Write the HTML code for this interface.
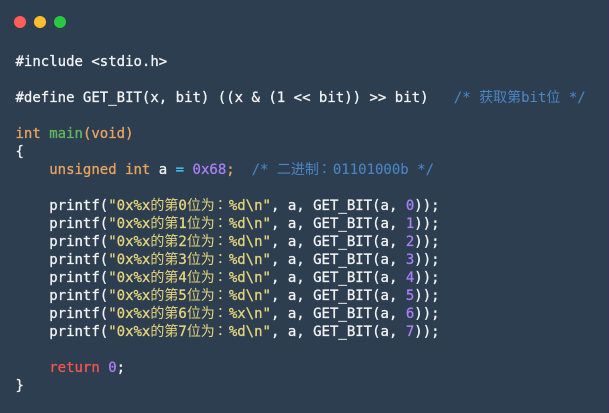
<!DOCTYPE html>
<html><head><meta charset="utf-8"><style>
html,body{margin:0;padding:0;width:609px;height:413px;overflow:hidden;background:#2d3e50}
#w{position:absolute;left:0;top:0;width:608px;height:413px;background:#2d3e50;border-top-left-radius:3px;border-top-right-radius:3px}
#edge{position:absolute;left:608px;top:0;width:1px;height:413px;background:#3f2f5c}
.d{position:absolute;top:16px;width:12px;height:12px;border-radius:50%}
pre{position:absolute;left:15.5px;top:53px;margin:0;font:14px/18px "DejaVu Sans Mono","WenQuanYi Zen Hei","Noto Sans CJK SC",monospace;color:#f2f2f2;white-space:pre;-webkit-text-stroke:.3px}
.k{color:#e8a35f}.f{color:#5fb760}.r{color:#f4554d}.n{color:#a97ef5}.s{color:#e6d47c}.c{color:#4a86c4;-webkit-text-stroke:.1px}.o{color:#3fc6e6}.p{color:#e8a35f}
i{font-style:normal;-webkit-text-stroke:0}
b{font-weight:normal;font-family:"Noto Sans CJK TC",sans-serif;-webkit-text-stroke:0;line-height:0;position:relative;left:-1.5px}
</style></head><body>
<div id="w"></div><div id="edge"></div>
<div class="d" style="left:14px;background:#ff5f56"></div>
<div class="d" style="left:34px;background:#ffbd2e"></div>
<div class="d" style="left:54px;background:#27c93f"></div>
<pre>#include &lt;stdio.h&gt;

#define GET_BIT(x, bit) ((x &amp; (1 &lt;&lt; bit)) &gt;&gt; bit)   <span class="c">/* <i>获取第</i>bit<i>位</i> */</span>

<span class="k">int</span> <span class="f">main</span><span class="p">(void)</span>
{
    <span class="k">unsigned int</span> a <span class="o">=</span> <span class="n">0x68</span><span class="p">;</span>  <span class="c">/* <i>二进制</i><b>：</b>01101000b */</span>

    printf(<span class="s">"0x%x<i>的第</i>0<i>位为</i><b>：</b>%d\n"</span>, a, GET_BIT(a, <span class="n">0</span>));
    printf(<span class="s">"0x%x<i>的第</i>1<i>位为</i><b>：</b>%d\n"</span>, a, GET_BIT(a, <span class="n">1</span>));
    printf(<span class="s">"0x%x<i>的第</i>2<i>位为</i><b>：</b>%d\n"</span>, a, GET_BIT(a, <span class="n">2</span>));
    printf(<span class="s">"0x%x<i>的第</i>3<i>位为</i><b>：</b>%d\n"</span>, a, GET_BIT(a, <span class="n">3</span>));
    printf(<span class="s">"0x%x<i>的第</i>4<i>位为</i><b>：</b>%d\n"</span>, a, GET_BIT(a, <span class="n">4</span>));
    printf(<span class="s">"0x%x<i>的第</i>5<i>位为</i><b>：</b>%d\n"</span>, a, GET_BIT(a, <span class="n">5</span>));
    printf(<span class="s">"0x%x<i>的第</i>6<i>位为</i><b>：</b>%x\n"</span>, a, GET_BIT(a, <span class="n">6</span>));
    printf(<span class="s">"0x%x<i>的第</i>7<i>位为</i><b>：</b>%d\n"</span>, a, GET_BIT(a, <span class="n">7</span>));

    <span class="r">return</span> <span class="n">0</span>;
}</pre>
</body></html>
